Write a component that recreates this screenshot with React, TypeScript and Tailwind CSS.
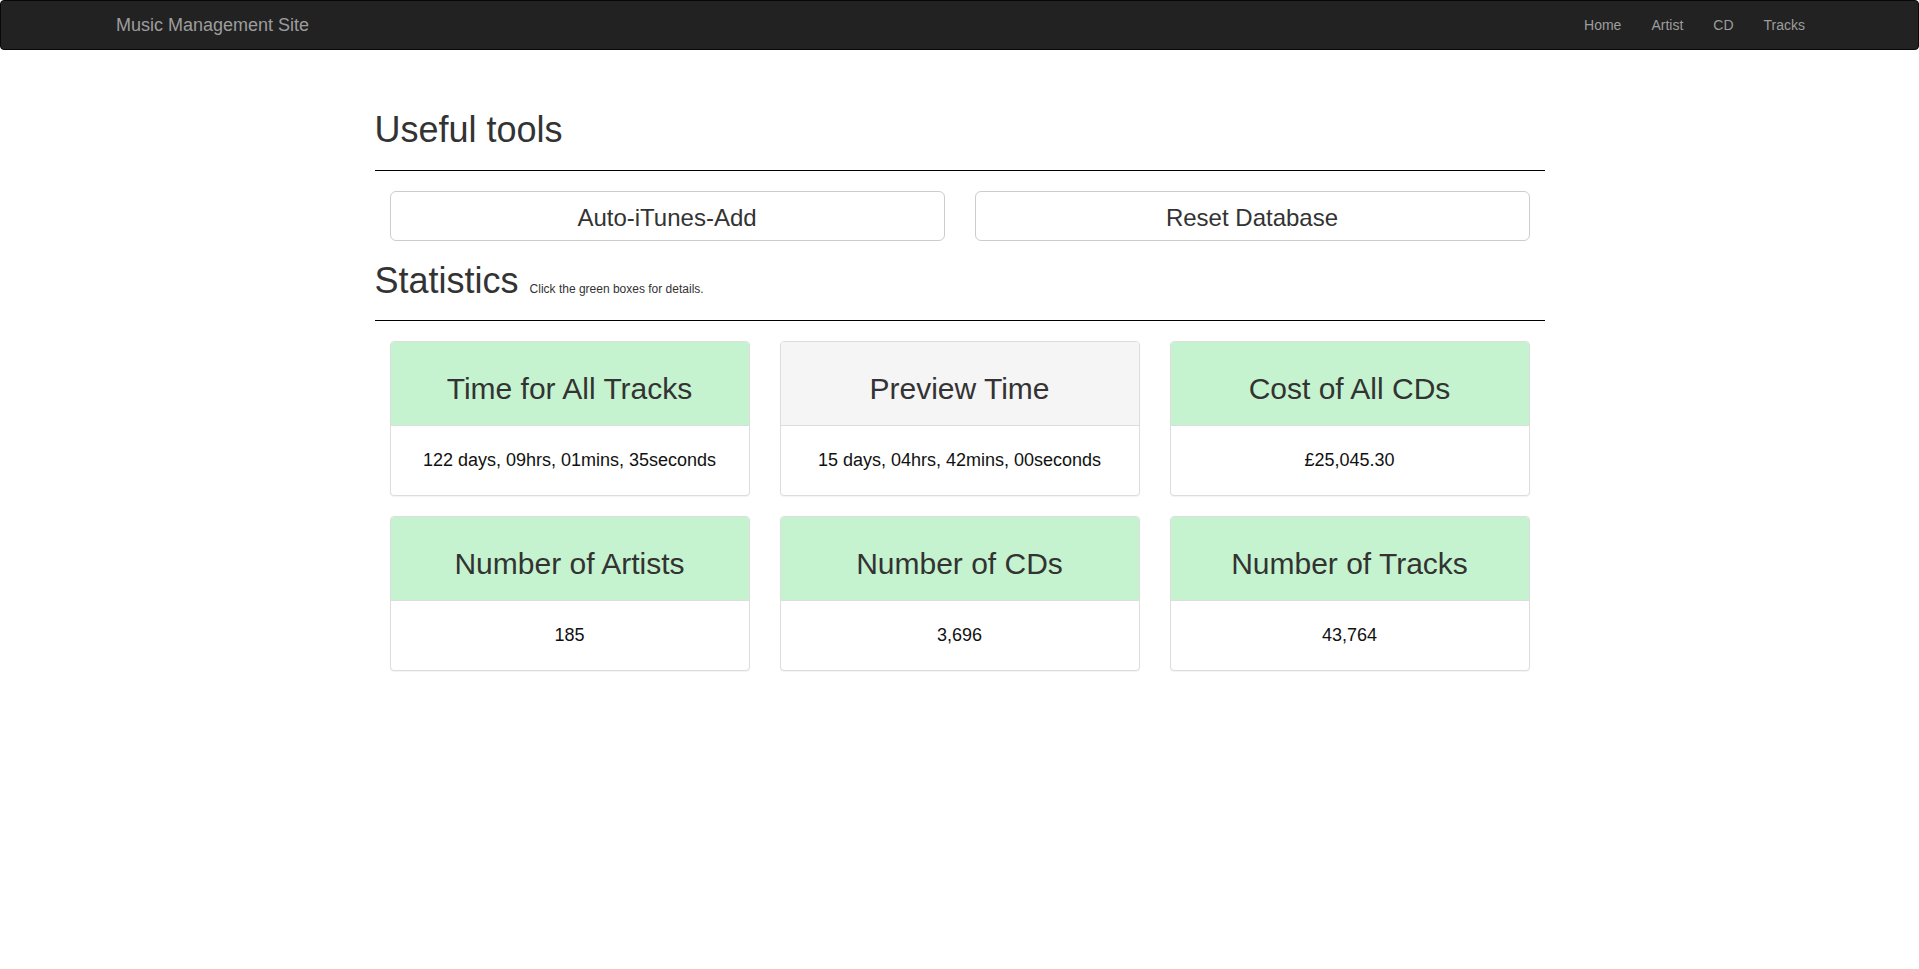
import React from 'react';

const navLinks = ['Home', 'Artist', 'CD', 'Tracks'];

const tools = ['Auto-iTunes-Add', 'Reset Database'];

const stats = [
  { title: 'Time for All Tracks', value: '122 days, 09hrs, 01mins, 35seconds', green: true },
  { title: 'Preview Time', value: '15 days, 04hrs, 42mins, 00seconds', green: false },
  { title: 'Cost of All CDs', value: '£25,045.30', green: true },
  { title: 'Number of Artists', value: '185', green: true },
  { title: 'Number of CDs', value: '3,696', green: true },
  { title: 'Number of Tracks', value: '43,764', green: true },
];

function StatCard({ title, value, green }: { title: string; value: string; green: boolean }) {
  return (
    <div className="rounded-[4px] border border-[#ddd] bg-white shadow-[0_1px_1px_rgba(0,0,0,0.05)] overflow-hidden cursor-pointer">
      <div
        className={`${green ? 'bg-[#c6f3cf]' : 'bg-[#f5f5f5]'} border-b border-[#ddd] px-[15px] pt-[30px] pb-[20px] text-center`}
      >
        <h2 className="text-[30px] leading-[33px] text-[#333]">{title}</h2>
      </div>
      <div className="py-[21px] text-center text-[18px] leading-[27px] text-[#111]">{value}</div>
    </div>
  );
}

export default function App() {
  return (
    <div className="min-h-screen bg-white font-['Liberation_Sans',Arial,sans-serif] text-[#333]">
      <nav className="h-[50px] bg-[#222] border border-[#080808] rounded-[4px] flex items-center justify-between pl-[100px] pr-[98px]">
        <a className="px-[15px] text-[18px] leading-[20px] text-[#9d9d9d]">Music Management Site</a>
        <ul className="flex items-center">
          {navLinks.map((l) => (
            <li key={l}>
              <a className="block px-[15px] text-[14px] leading-[20px] text-[#9d9d9d]">{l}</a>
            </li>
          ))}
        </ul>
      </nav>

      <main className="mx-auto w-[1170px]">
        <h1 className="mt-[60px] text-[36px] leading-[40px] font-normal">Useful tools</h1>
        <hr className="mt-[20px] border-0 border-t border-black" />

        <div className="mt-[20px] grid grid-cols-2 gap-[30px] px-[15px]">
          {tools.map((t) => (
            <button
              key={t}
              className="h-[50px] pt-[4px] rounded-[6px] border border-[#ccc] bg-white text-[24px] leading-[32px] text-[#333] hover:bg-[#e6e6e6]"
            >
              {t}
            </button>
          ))}
        </div>

        <h2 className="mt-[20px] flex items-baseline text-[36px] leading-[40px] font-normal">
          Statistics
          <small className="ml-[11px] text-[12px] leading-[16px] text-[#333]">Click the green boxes for details.</small>
        </h2>
        <hr className="mt-[19px] border-0 border-t border-black" />

        <div className="mt-[20px] grid grid-cols-3 gap-x-[30px] gap-y-[20px] px-[15px]">
          {stats.map((s) => (
            <StatCard key={s.title} {...s} />
          ))}
        </div>
      </main>
    </div>
  );
}
